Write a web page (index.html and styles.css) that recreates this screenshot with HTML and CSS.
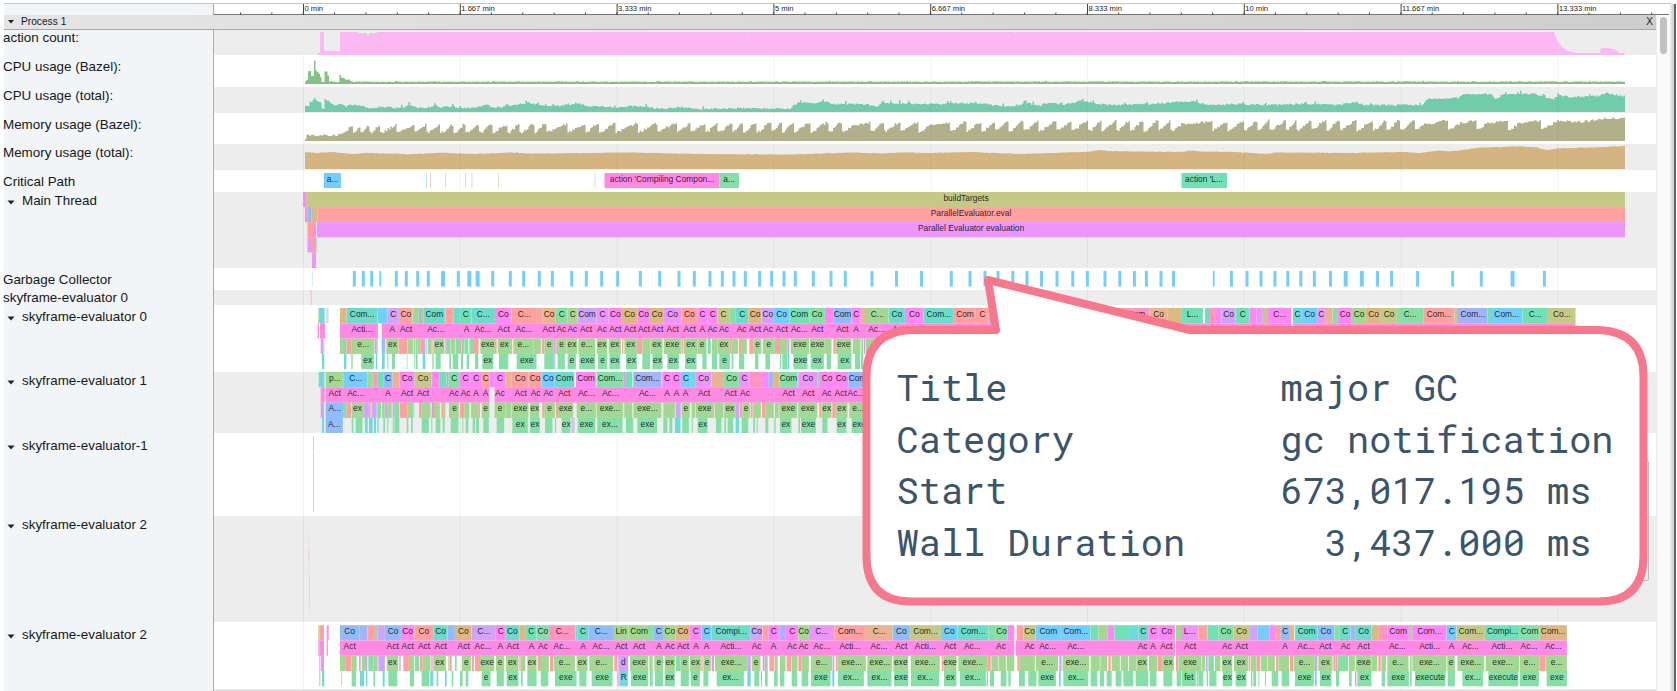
FILE: index.html
```
<!DOCTYPE html>
<html lang="en">
<head>
<meta charset="utf-8">
<title>Trace profile</title>
<link rel="stylesheet" href="styles.css">
</head>
<body>
<div class="viewer">
  <div class="ruler">
    <div class="ruler-corner"></div>
    <svg class="ruler-scale" id="ruler" viewBox="214 3 1457 13"></svg>
  </div>
  <div class="body">
    <main class="main">
      <header class="process"><svg class="arrow" viewBox="0 0 8 5"><path d="M1 1h6L4 4.5z"/></svg><span class="process-name">Process 1</span><span class="close">X</span></header>
      <div class="rows" id="rows"></div>
    </main>
    <div class="scroll"><div class="thumb"></div></div>
  </div>
  <div class="edge"></div>
  <div class="shade"></div>
  <aside class="callout">
    <svg class="bubble" viewBox="860 270 792 340"><path d="M911 330H996L988 280L1190 330H1599Q1643.500 332 1643.500 376V556Q1643.500 601.500 1599 601.500H911Q866.500 601.500 866.500 556V376Q866.500 332 911 330Z"/></svg>
    <dl class="facts">
      <dt>Title</dt><dd>major GC</dd>
      <dt>Category</dt><dd>gc notification</dd>
      <dt>Start</dt><dd>673,017.195 ms</dd>
      <dt>Wall Duration</dt><dd class="indent">3,437.000 ms</dd>
    </dl>
  </aside>
</div>
<script src="trace.js"></script>
</body>
</html>
```
FILE: styles.css
```
* { box-sizing: border-box; }
body { margin: 0; background: #fff; font-family: "Liberation Sans", Arial, sans-serif; color: #16181a; }
.viewer { position: relative; width: 1677px; height: 691px; overflow: hidden; padding: 3px 0 0 4px; }
.ruler { display: flex; height: 12px; }
.ruler-corner { width: 210px; background: #f1f5f8; border-top: 1px solid #c8c8c8; border-right: 1px solid #a4a8a8; }
.ruler-scale { display: block; width: 1457px; height: 13px; }
.ruler-scale text { font-size: 7.6px; fill: #222; }
.body { display: flex; height: 676px; }
.main { width: 1652px; }
.process { display: flex; align-items: center; height: 15px; padding: 0 3px 1px 3px; border-bottom: 1px solid #a9a9a9; background: linear-gradient(90deg, #e5e5e5, #d9d9d9 50%, #cecece); font-size: 10.2px; line-height: 12px; }
.arrow { width: 8px; height: 5px; fill: #222; flex: none; }
.process-name { margin-left: 6px; }
.close { margin-left: auto; font-size: 10px; }
.row { display: flex; background: #fff; }
.row-alt { background: #ededed; }
.label { display: flex; width: 210px; flex: none; background: #f1f5f8; border-right: 1px solid #a9adad; font-size: 13.4px; line-height: 16px; white-space: nowrap; }
.label span { margin-left: -1px; }
.label .arrow { margin: 7px 8px 0 3px; }
.track { display: block; width: 1442px; flex: none; overflow: hidden; }
.track text { font-size: 8.4px; text-anchor: middle; fill: #111; fill-opacity: .9; }
.scroll { width: 15px; background: #fafafa; border-left: 1px solid #eee; padding: 2px 0 0 3px; }
.thumb { width: 7px; height: 37px; border-radius: 4px; background: #c1c1c2; }
.edge { position: absolute; top: 4px; right: 1px; width: 6px; height: 687px; background: linear-gradient(90deg, #eee, #ccc); border-right: 2px solid #666; }
.shade { position: absolute; left: 1640px; top: 460px; width: 9px; height: 121px; border: 1px solid #bbb; border-radius: 2px; }
.callout { position: absolute; left: 860px; top: 270px; width: 792px; height: 340px; }
.bubble { position: absolute; inset: 0; width: 792px; height: 340px; }
.bubble path { fill: #fff; stroke: #f7788c; stroke-width: 8; stroke-linejoin: round; }
.facts { position: relative; display: grid; grid-template-columns: 384px auto; margin: 0; padding: 91px 0 0 36.5px; font: 37px/51.6px "Roboto Mono", "DejaVu Sans Mono", monospace; color: #3b556b; white-space: nowrap; }
.facts dd { margin: 0; }
.facts .indent { padding-left: 44.5px; }
```
FILE: trace.js
```
const NS = 'http://www.w3.org/2000/svg';
const C = {
  t: '#6bdcc8', g: '#85dfa6', l: '#a2d891', p: '#ff8ae6', m: '#ff88f6', v: '#d0a4f9', c: '#72cffd',
  b: '#8fbcfb', i: '#a3b4f8', o: '#dcb981', s: '#ffa29f', r: '#ff95c0', k: '#c4c985', e: '#e9b48f',
  d: '#ec95fb', a: '#6fdade', n: '#70e0b5', x: '#dddddd'
};
const TICKS = [0, 1, 2, 3, 4, 5, 6, 7, 8].map(n => 303 + n * 156.8);

function add(parent, tag, attrs, text) {
  const el = document.createElementNS(NS, tag);
  for (const k in attrs) el.setAttribute(k, attrs[k]);
  if (text) el.textContent = text;
  parent.appendChild(el);
  return el;
}
function bar(svg, x, y, w, h, fill, opacity) {
  return add(svg, 'rect', { x, y, width: w, height: h, fill, 'fill-opacity': opacity || 1 });
}
function grid(svg, h) {
  TICKS.forEach(x => bar(svg, x, 0, 1, h, '#777', 0.08));
}

/* A lane is a list of [origin, slices]; slice offsets are thirds of a pixel: start, colour, end, label. */
function lane(svg, y, groups, h = 15.3) {
  groups.forEach(([origin, text]) => text.split(' ').forEach(tok => {
    const [, s, col, e, label] = tok.match(/^(\d+)([a-z])(\d+)(?::(.*))?$/);
    const x = origin + s / 3, w = (e - s) / 3;
    bar(svg, x, y, w, h, C[col]);
    if (w > 5) bar(svg, x + w - .3, y, .5, h, '#fff', .45);
    if (label) add(svg, 'text', { x: x + w / 2, y: y + 8.8 }, label);
  }));
}
function labels(svg, y, groups) {
  groups.forEach(([origin, text]) => text.split(' ').forEach(tok => {
    const [, s, label] = tok.match(/^(\d+)(.*)$/);
    add(svg, 'text', { x: origin + s / 3, y: y + 8.8 }, label);
  }));
}

let seed = 11;
const rnd = () => (seed = (seed * 16807) % 2147483647) / 2147483647;

/* Stepped area interpolated between [x, y] points, with vertical noise. */
function area(svg, pts, base, fill, noise, spike) {
  let d = `M${pts[0][0]} ${base}`, end = pts[pts.length - 1][0], i = 0;
  for (let x = pts[0][0]; x < end; x += 1.5) {
    while (i < pts.length - 2 && pts[i + 1][0] <= x) i++;
    const [x0, y0] = pts[i], [x1, y1] = pts[i + 1];
    let y = y0 + (y1 - y0) * (x - x0) / Math.max(.01, x1 - x0) + (rnd() - .5) * noise;
    if (spike && rnd() < .05) y -= spike;
    d += `V${y.toFixed(1)}H${(x + 1.5).toFixed(1)}`;
  }
  add(svg, 'path', { d: d + `V${base}Z`, fill });
}

const draw = {
  actions(s) {
    add(s, 'path', { fill: '#fcb8f2', d: 'M318 55V53H320V32H324V50L327 51L333 50.500L340 51.500V32H358V33H367V35.500H369V33H377V32H748V33H749V32H1015V33H1016V32H1554L1557 40L1562 47L1568 51L1577 53H1600.500V48H1608L1616 50L1619 53H1624.500V55Z' });
    grid(s, 25);
  },
  cpuBazel(s) {
    grid(s, 100);
    area(s, [[305, 82], [307.5, 80], [308, 71], [310, 71], [311, 76], [312.5, 76], [313, 61], [314, 61], [315, 70], [318, 73], [320, 77], [321, 82], [323, 82], [324, 72], [327, 71], [328, 81], [338, 82], [339, 74], [341, 77], [344, 79], [349, 80], [352, 81.7], [1624, 81.6]], 84, '#86c184', .8, .5);
  },
  cpuTotal(s) {
    area(s, [[305, 106], [308, 106], [309, 101], [312, 103], [313, 97], [316, 101], [320, 102], [321, 109], [323, 109], [324, 98], [328, 102], [333, 105], [340, 104], [345, 107], [349, 105], [358, 105], [367, 108], [385, 107], [400, 108], [406, 106], [408, 103], [409, 100], [410, 105], [418, 108], [430, 108], [434, 104], [439, 108], [450, 106], [459, 108], [475, 108], [485, 105], [497, 108], [510, 105], [528, 103], [545, 106], [570, 105], [580, 104], [587, 107], [600, 106], [617, 108], [630, 106], [645, 107], [660, 109], [680, 107], [700, 109], [740, 108], [789, 109], [792, 106], [799, 102], [815, 104], [821, 101], [835, 104], [860, 104], [870, 105], [877, 107], [880, 103], [930, 104], [975, 103], [1010, 107], [1025, 103], [1040, 106], [1050, 102], [1060, 105], [1080, 101], [1100, 104], [1120, 105], [1150, 104], [1190, 101], [1210, 105], [1240, 104], [1260, 105], [1300, 104], [1340, 105], [1352, 102], [1365, 105], [1423, 105], [1426, 99], [1457, 98], [1464, 94], [1490, 94], [1495, 100], [1502, 94], [1535, 94], [1546, 98], [1553, 99], [1558, 95], [1570, 97], [1598, 96], [1606, 93], [1620, 96], [1624.5, 96]], 112, '#70ccab', 1.6, 2.4);
    grid(s, 113);
  },
  memBazel(s) {
    const drops = [352, 360, 369, 379, 395, 413, 425, 439, 453, 464, 478, 491, 507, 519, 533, 545, 567, 584, 597.5, 615, 637, 656, 676, 690, 705, 717, 731, 742, 756, 770, 781, 793, 810, 827, 841, 869, 883, 899, 918, 949, 965, 981, 994, 1008, 1022, 1038, 1055, 1071, 1087, 1101, 1115, 1129, 1143, 1157, 1170, 1211, 1227, 1243, 1257, 1268, 1285, 1296, 1310, 1325, 1339, 1356, 1372, 1386, 1399, 1414, 1447, 1475, 1507, 1540];
    const pts = [[305, 138], [307, 135], [315, 136], [325, 135], [340, 135]];
    drops.forEach((x, n) => {
      const prev = n ? drops[n - 1] : 340, f = (x - 350) / 1200;
      const lo = 133 - 3.5 * f, hi = 127 - 6.5 * Math.sqrt(Math.max(0, f));
      pts.push([prev + .3, lo], [prev + Math.min(4, (x - prev) * .3), lo - 1], [prev + Math.min(11, (x - prev) * .6), hi + 3], [x - 1.8, hi], [x, hi - .5]);
    });
    pts.push([1540.3, 129], [1548, 126], [1556, 121], [1580, 122], [1600, 119], [1624.5, 118]);
    area(s, pts, 141, '#b1b08b', 2.6);
    grid(s, 145);
  },
  memTotal(s) {
    area(s, [[305, 152], [315, 153], [332, 152], [350, 154], [367, 153], [410, 154.3], [440, 152.7], [475, 154], [510, 152.5], [530, 153.5], [590, 153], [630, 152.5], [700, 154], [790, 154.5], [850, 152.5], [880, 153.5], [905, 152.3], [925, 153], [970, 152], [1020, 154], [1080, 152], [1090, 151.5], [1098, 149.8], [1107, 151], [1125, 151.3], [1180, 152], [1190, 150.5], [1200, 151.6], [1235, 152], [1265, 154], [1275, 152.5], [1350, 153], [1400, 152], [1420, 153], [1438, 150.5], [1450, 151.5], [1480, 147.5], [1520, 146.3], [1537, 147.5], [1545, 150], [1556, 148.5], [1590, 147.5], [1624.5, 146]], 169, '#d4b480', .5);
    grid(s, 170);
  },
  critical(s) {
    grid(s, 200);
    [[426, 'c'], [430, 's'], [445, 's'], [465, 's'], [471.5, 'k'], [498, 'k'], [594.5, 'g']].forEach(([x, c]) => bar(s, x, 173, 1, 15, C[c], .55));
    bar(s, 324, 173, 17, 15, C.c); add(s, 'text', { x: 332.5, y: 182 }, 'a...');
    bar(s, 604.5, 173, 115, 15, C.p); add(s, 'text', { x: 662, y: 182 }, "action 'Compiling Compon...");
    bar(s, 719.5, 173, 19.5, 15, C.g); add(s, 'text', { x: 729, y: 182 }, 'a...');
    bar(s, 1181.5, 173, 45.5, 15, C.n); add(s, 'text', { x: 1204, y: 182 }, "action 'L...");
  },
  mainThread(s) {
    grid(s, 270);
    const q = (x, e, n, c, h = 15.1) => bar(s, x, 192 + n * 15.1, e - x, h, C[c]);
    q(303, 306.5, 0, 'm'); q(306.5, 1625, 0, 'k');
    q(305, 307.5, 1, 'r'); q(307.5, 311.5, 1, 'b'); q(311.5, 317.5, 1, 'o'); q(317.5, 1625, 1, 's');
    q(307.5, 312, 2, 's'); q(312, 316, 2, 'r'); q(317, 1625, 2, 'd');
    q(307.5, 312, 3, 'd'); q(312, 316, 3, 's'); q(316.5, 317.2, 3, 'c'); q(312, 316, 4, 'd', 15.6);
    [['buildTargets', 966], ['ParallelEvaluator.eval', 971], ['Parallel Evaluator evaluation', 971]].forEach(([t, x], n) => add(s, 'text', { x, y: 200.5 + n * 15.1 }, t));
  },
  gc(s) {
    grid(s, 300);
    bar(s, 312, 271, .7, 15.5, C.c, .5);
    const xs = [];
    [163, 190, 215, 241, 289, 319, 353, 385, 429, 475, 508, 533, 578, 631, 671, 718, 757, 815, 859].forEach(v => xs.push(300 + v / 3));
    [65, 113, 181, 239, 297, 343, 390, 427, 462, 496, 539, 575, 612, 646, 700, 753, 796, 876].forEach(v => xs.push(580 + v / 3));
    xs.push(896.5, 921.5, 951.3, 970, 985, 998, 1012.8, 1027, 1041.5, 1057, 1072.8, 1087.4, 1105, 1119.8, 1134.4, 1146.4, 1161, 1173.5, 1213.7, 1231.4, 1247, 1261, 1275, 1287.8, 1300.8, 1314.4, 1330.5, 1345.7, 1361.8, 1377.5, 1391.6, 1417.6, 1452.6, 1481.3, 1512.6, 1544.4);
    xs.forEach((x, n) => {
      const w = [8, 10, 11, 64, 65, 71].includes(n) ? 4 : (n === 3 || n === 55 ? 1.8 : 3);
      bar(s, x - w / 2, 271, w, 15.5, C.c);
    });
  },
  sky0(s) { grid(s, 400); bar(s, 310.7, 290, 1, 15, C.m, .6); },
  eval0(s) {
    grid(s, 400);
    lane(s, 308, [
      [300, '55k60 60a74 77x86 120o140 140t233:Com... 233c263 263v297:C 297s338:Co 338l357 357b363 363o371 371t435:Com 436s460 460t480 480n515:C 515t585:C... 585m635:Co 635s711:C... 711s727 727e768:Co 768g803:C 803l833:C 833v889:Com'],
      [580, '49d86:C 86m126:Co 126o172:Co 172m210:Co 210o252:Co 252d304:Co 304s352:Co 352m383:C 383m413:C 413k448:C 448g468 468t505:C 505o545:Co 545v582:Co 582c628:Co 628n688:Com 688g735:Co 735m760 760b815:Com 815m843:C 843e858'],
      [860, '18l86:C... 86t135:Co 135m191:Co 191t282:Com... 282s348:Com 348s387:C 387b440 440s800 790r868:Com 868e924:Co 924o966 966n1029:L... 1035n1047 1047r1065 1065m1084 1084v1127:Co 1127n1169:C 1169m1190 1190d1209 1209k1224 1224m1294:C... 1299a1326:C 1326c1372:Co 1372d1395:C 1395e1418 1418g1434 1434m1476:Co 1476l1518:Co 1518o1563:Co 1563k1611:Co 1611g1690:C... 1690s1784:Com... 1784k1794 1794i1883:Com... 1883n1893 1893c1987:Com... 1987n2064:C... 2064k2147:Co...']]);
    lane(s, 323.3, [[300, '53r57 60p76 120p234 245p1740'], [880, '0p1234 1239p2087']]);
    labels(s, 323.3, [
      [300, '186Acti... 277A 318Act 407Ac... 500A 549Ac... 611Act 672Ac... 746Act 784Ac 817Ac 858Act'],
      [580, '66Ac 106Act 150Act 192Act 232Act 278Act 329Act 367A 397Ac 432Ac 485Ac 525Act 564Ac 605Act 658Ac... 712Act 787Act 828A 890Ac... 955Act']]);
    lane(s, 338.6, [
      [300, '62v69 70s73 120l132 132g140 140s155 155l224:e... 225p229 229v233 245c252 252v256 259l296:ex 296s323 323l340 341l346 347g352 352l361 361s369 369v376 378c380 383l395 395s398 400l434:ex 436p440 440g450 451l466 467g480 480s483 484g494 495g505 508g522 522s536 541l585:exe 585s590 593l633:ex 633s637 640l700:e... 700l723 725s733 733l762:e 762v766 766s770 770l800:e 800l832:ex 835l886:e...'],
      [580, '50l82:ex 86l123:ex 126s130 133l171:ex 171s187 187l212 212l248:ex 251l303:exe 304s310 312l352:ex 352l380:e 383n392 396l413 413l450:ex 450s455 455l475 477s483 483l501 508s520 520l545:e 548l585:e 585s600 600l622 622v628 632l688:exe 690l735:exe 735l755 760s767 767l815:exe 818l842 844g850 852p856 858l950:e...']]);
    lane(s, 353.9, [
      [300, '66a73 132a139 154g158 184g222:ex 228a232 246a254 262g265 276g285 320g322 343g346 348g353 368a376 397g401 407g422 448g453 458g475 483g489 500g507 525g535 547g580:ex 597g625 650g710:exe 733g762 763b766 773g795 803g828:e 838g886:exe'],
      [580, '54g82:e 88g121:ex 138g171:ex 187g211 217g248:ex 262g297:ex 315g350:ex 367g380 396g412 418g450:e 455g460 477g493 525g535 556g570 600g603 607g623 623a628 640g683:exe 692g732:ex 740g753 773g815:ex 825g840 843g850 860g920']]);
  },
  eval1(s) {
    grid(s, 500);
    lane(s, 372, [
      [300, '56g60 60a73 77l132:p... 132c202:C... 202l222 222r232 232n250 250b278:C 278e299 299m344:Co 344k395:Co 395m418 418n440 440p445 445g480:C 480m513:C 513m545:C 545s569:C 569m584 584m616:C 616e636 636s686:Co 686s725:Co 725c765:Co 765t823:Com 828m888:Com'],
      [580, '50g130:Com... 130m136 136n157 160i245:Com... 247m275:C 275m303:C 303c333:C 333a347 347d395:Co 395e432 432g477:Co 477d510:C 510r546 546m565 565i580 580o598 598g653:Com 655d712:Co 712g720 720m762:Co 762m805:Co 805b860:Com']]);
    lane(s, 387.3, [[300, '62p74 77p569 584p1410'], [770, '0p300']]);
    labels(s, 387.3, [
      [300, '104Act 167Ac... 264A 321Act 369Act 462Ac 497Ac 528A 557A 600Ac 662Act 707Ac 745Ac 793Act'],
      [580, '20Ac... 92Ac... 202Ac... 261A 290A 317A 372Act 452Act 495Ac 626Act 685Act 740Ac 782Act 828Ac...']]);
    lane(s, 402.6, [
      [300, '62v72 77b132:A... 132g140 140s153 155l190:ex 190v207 207s212 215v230 232g243 246l254 255v262 262l275 278v283 283g297 299s322 322l340 341c343 357s365 365l392 395p402 402l420 424s430 430l436 447s450 450l477:e 480s493 493l508 513l535 535s540 545l569:e 584l617:e 617l635 636l686:exe 690l718:ex 727s733 733l765:e 768s774 774l820:exe 830l888:e...'],
      [580, '50l130:exe... 133l157 160l245:exe... 250l285 287v302 305l330:e 335l346 348l400:exe 400s403 405l431 433l466:ex 466v478 480s486 487l510:e 512s518 520l543 546s556 556l582 585l596 598l652:exe 655l712:exe 718s724 725l755:ex 757s767 767l803:ex 808l860:e...']]);
    lane(s, 417.9, [
      [300, '66a72 77b129:A... 155g160 167g188 195a203 207a218 222a228 232a236 250g255 262g265 278g281 283g298 320g325 333g338 365g387 394g397 407g421 428g434 452g476 487g490 497g505 518g525 528g537 550g567 590g613 637g684:ex 690g720:ex 735g758 765a768 785g812:ex 815p818 820a823 833g886:exe'],
      [580, '52g128:ex... 138g160 172g232:exe 250g262 268g277 285a302 307g327 335g338 353g383:ex 408g425 433g438 443g460 467a477 485g505 520g525 530g533 556g565 583g587 600g635:ex 655g660 663g708:exe 727g743 770g800:ex 815g860:exe']]);
  },
  evalMinus(s) {
    grid(s, 520);
    [['m', 436], ['v', 452], ['g', 467], ['g', 482], ['s', 497]].forEach(([c, y]) => bar(s, 313, y, 1, 15, C[c], .65));
  },
  eval2(s) {
    grid(s, 640);
    [['x', 530], ['r', 546], ['x', 561], ['k', 576], ['k', 591], ['x', 606]].forEach(([c, y]) => bar(s, y > 570 ? 309 : 308.3, y, 1, 15, C[c], .4));
  },
  eval2b(s) {
    grid(s, 700);
    lane(s, 625.2, [
      [310, '25k28 28s42 50m56 90b148:Co 148i172 172s195 195g203 203v225 225b273:Co 273m313:Co 313s370:Co 370t413:Co 413b435 435o485:Co 485v558:C... 558m586:C 586t628:Co 628o648 648n680:C 680g717:Co 717r797:C... 797a803 803t835:C 835b912:C... 912l955:Lin 955l1020:Com'],
      [640, '25g40 40b72:C 72l107:Co 107o150:Co 150m185:C 185c215:C 215t332:Compi... 332v368:Co 368s385 385m418:C 418i438 438m475:C 475l507:Co 507d583:C... 583s678:Com... 678e758:C... 758b810:Co 810k903:Com... 903c953:Co 953t1045:Com...'],
      [970, '55g78 78g112:Co 112m133 140s160 160k197:Co 197c273:Com 273c362:Com... 362n385 385l412 412m433 433n480 480a505 505t535:C 535m565:C 565m615:Co 618l633 633d685:L... 685s713 713n745 745g790:Co 790k840:Co 840v862 862c898 898m918 918s932 932b960:C 960e972 974g978 978t1042:Com'],
      [1300, '52b103:Co 103g120 120t152:C 152i167 167t215:Co 215o237 237r262 262m327:Com 327l337 337m440:Com... 440c470:C 470k555:Com... 555n660:Compi... 660g718:Com 718o801:Com...']]);
    lane(s, 640.5, [[310, '25r28 28p42 50r54 90p1990'], [970, '0p133 138p615 618p1791']]);
    labels(s, 640.5, [
      [310, '119Act 248Act 293Act 342Act 392Act 461Act 519Ac... 571A 608Act 665A 699Ac 756Ac... 819A 873Ac... 934Act 987Act'],
      [640, '57A 90Ac 129Act 168A 200A 273Acti... 350Ac 401A 456Ac 491Ac 546Ac... 630Acti... 717Ac... 784Act 856Acti... 930Act 997Ac...'],
      [970, '93Ac 179Ac 233Ac... 317Ac... 518Ac 549A 589Act 660Act 771Ac 815Act 945A 1008Ac...'],
      [1300, '76Act 137Ac 191Act 292Ac... 389Acti... 455A 511Ac... 606Acti... 687Ac... 760Ac...']]);
    lane(s, 655.8, [
      [310, '28p31 33v42 90l108 108s125 125l140 147v152 155l165 165v172 175g190 190l203 205v225 230l265:ex 268v272 280s297 297l313 315g328 330s338 338l362 364p368 370l408:ex 415l419 420s425 435g440 455l483:e 485s492 495s510 510l553:exe 558l583:e 588l626:ex 628s632 633l646 652l680:ex 683s690 690l717 720s730 732l795:e... 800l833:ex 838l910:e... 913s922 925v955:d 960l1015:exe'],
      [640, '28l38 43l70:e 74l105:ex 107g122 122l147:e 150l183:ex 184s188 190l213:e 215p222 225l322:exe... 322v332 335l362:e 368p374 375g383 388s403 405l413 420l437 440s453 455l473 475s485 485l507 513l577:e... 578v583 588s592 592l678:exe... 682l757:exe... 760l805:exe 812l900:exe... 905s909 910l950:exe 955l1042:exe...'],
      [970, '52s62 64l86 87l108 110l133 142s148 148l195 198l265:e... 268v275 278l358:exe... 362l390 391l412 415s422 425l450 452l475 477l500 500l533:ex 537l562 563s577 577l612:ex 618s624 625l695:exe 696l706 708v713 715g732 735l752 755l787:ex 792l835:ex 836s841 843l860 860s870 872l892 893l915 918s924 925l958 960s970 972l1035:e...'],
      [1300, '45v52 55l98:ex 100s106 107s111 112g145 147l165 167l215:exe 215l232 235s242 244l258 262l326:e... 330l335 337l440:exe... 442l465:e 472l553:exe... 557l658:exe... 660l718:e... 718s737 738l801:e...']]);
    lane(s, 671, [
      [310, '28s31 36a43 94c96 125g138 150a162 168a172 190g195 218a224 235g262 300g312 335g358 361a370 380g385 405a410 425g430 450g458 467g475 515g542:e 560g582 590g626:ex 633g638 652g680 692g715 735g800:exe 808g830 845g908:exe 922p926 928a954:R 963g1015:exe'],
      [640, '30g38 45g70 74g105:ex 122g147 152g180:e 190g205 230g312:ex... 322a332 343g358 363c366 375g383 402g413 420g433 455g472 485g505 513g572:exe 577c583 594g672:ex... 682g755:ex... 762g805:exe 813g898:ex... 912g950:ex 960g1038:ex...'],
      [970, '50a54 60g72 92g110 115g122 147g165 175g200 205g258:exe 267c272 280g355:ex... 362g382 390g402 410g425 437g455 460g490 497g535 540g560 580g607 620g633 635g678:fet 680g684 685g700 710g714 718g740 758g787:ex 797g830:ex 843g847 850g858 865g868 885g888 905g925 935g958 975g1032:exe'],
      [1300, '45c50 60g95:ex 108g118 147g155 165p169 172g215:ex 245g255 262g327:exe 330g335 345g437:execute 443g465 487g550:ex... 565g655:execute 660g717:exe 740g801:exe']]);
    bar(s, 214, 689.5, 1442, 1, '#ccc');
  }
};

/* name, top, bottom, label offset, collapsible, painter */
const ROWS = [
  ['action count:', 30, 55, 0, 0, 'actions'], ['CPU usage (Bazel):', 55, 87, 4, 0, 'cpuBazel'],
  ['CPU usage (total):', 87, 113, 1, 0, 'cpuTotal'], ['Memory usage (Bazel):', 113, 144, 4, 0, 'memBazel'],
  ['Memory usage (total):', 144, 170, 1, 0, 'memTotal'], ['Critical Path', 170, 192, 4, 0, 'critical'],
  ['Main Thread', 192, 268, 1, 1, 'mainThread'], ['Garbage Collector', 268, 290, 4, 0, 'gc'],
  ['skyframe-evaluator 0', 290, 305, 0, 0, 'sky0'], ['skyframe-evaluator 0', 305, 372, 4, 1, 'eval0'],
  ['skyframe-evaluator 1', 372, 433, 1, 1, 'eval1'], ['skyframe-evaluator-1', 433, 516, 5, 1, 'evalMinus'],
  ['skyframe-evaluator 2', 516, 622, 1, 1, 'eval2'], ['skyframe-evaluator 2', 622, 691, 5, 1, 'eval2b']
];
const host = document.getElementById('rows');
ROWS.forEach(([name, top, bottom, offset, fold, painter], n) => {
  const row = document.createElement('div');
  row.className = n % 2 ? 'row' : 'row row-alt';
  row.style.height = bottom - top + 'px';
  const label = document.createElement('div');
  label.className = 'label';
  label.style.paddingTop = offset + 'px';
  label.innerHTML = (fold ? '<svg class="arrow" viewBox="0 0 8 5"><path d="M.5.5h7L4 4.500z"/></svg>' : '') + `<span>${name}</span>`;
  row.appendChild(label);
  const svg = add(row, 'svg', { class: 'track', viewBox: `214 ${top} 1442 ${bottom - top}`, height: bottom - top });
  draw[painter](svg);
  host.appendChild(row);
});

const ruler = document.getElementById('ruler');
bar(ruler, 214, 3, 1457, 1, '#c4c4c4');
bar(ruler, 214, 14, 1455, 1, '#777');
for (let x = 240; x < 1665; x += 31.36) bar(ruler, x, 12.5, 1, 2, '#444');
['0 min', '1.667 min', '3.333 min', '5 min', '6.667 min', '8.333 min', '10 min', '11.667 min', '13.333 min'].forEach((t, n) => {
  bar(ruler, TICKS[n], 4, 1, 11, '#444');
  add(ruler, 'text', { x: TICKS[n] + 1.5, y: 10.5 }, t);
});
```
